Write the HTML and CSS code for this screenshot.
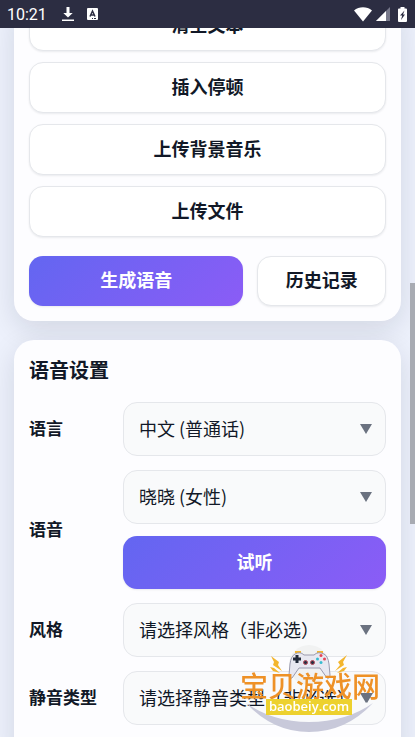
FILE: index.html
```html
<!DOCTYPE html>
<html lang="zh-CN">
<head>
    <meta charset="UTF-8">
    <meta name="viewport" content="width=device-width, initial-scale=1.0">
    <title>语音设置</title>
    <link rel="stylesheet" href="styles.css">
</head>
<body>
    <header class="status-bar">
        <span class="time">10:21</span>
        <svg class="icon-download" width="14" height="16" viewBox="0 0 14 16" fill="#fff">
            <path d="M5.500 1h3v6h3.200L7 11.500 2.300 7h3.200zM1 13.500h12V15H1z"/>
        </svg>
        <svg width="11" height="12" viewBox="0 0 11 12">
            <rect width="11" height="12" rx="1" fill="#fff"/>
            <path d="M3 8.500 5.500 3 8 8.500M4 7h3" fill="none" stroke="#2c2d42" stroke-width="1.500"/>
            <path d="M5 10.500h1M7 10.500h2" stroke="#2c2d42" stroke-width="1"/>
        </svg>
        <div class="status-right">
            <svg width="18" height="15" viewBox="0 0 18 15" fill="#fff">
                <path d="M0 3.500C5-.8 13-.8 18 3.500L9 14.500z"/>
            </svg>
            <svg width="14" height="14" viewBox="0 0 14 14">
                <path d="M14 0v14H0z" fill="#77788a"/>
                <path d="M10 4v10H0z" fill="#fff"/>
            </svg>
            <svg class="icon-battery" width="9" height="15" viewBox="0 0 9 15">
                <path d="M2.500 0h4v1.500H8q1 0 1 1V14q0 1-1 1H1q-1 0-1-1V2.500q0-1 1-1h1.500z" fill="#fff"/>
                <path d="M6.500 3.500 2 8.500h2.200L3 13l4-5.500H5z" fill="#2c2d42"/>
            </svg>
        </div>
    </header>

    <main class="page">
        <!-- 文本操作 -->
        <section class="card card-tools">
            <div class="tools">
                <button class="btn" type="button">清空文本</button>
                <button class="btn" type="button">插入停顿</button>
                <button class="btn" type="button">上传背景音乐</button>
                <button class="btn" type="button">上传文件</button>
            </div>
            <div class="actions">
                <button class="btn btn-primary" type="button">生成语音</button>
                <button class="btn" type="button">历史记录</button>
            </div>
        </section>

        <!-- 语音设置 -->
        <section class="card card-settings">
            <h2>语音设置</h2>
            <div class="row">
                <label for="language">语言</label>
                <div class="select-box">
                    <select id="language"><option>中文 (普通话)</option></select>
                </div>
            </div>
            <div class="row">
                <label for="voice">语音</label>
                <div class="voice">
                    <div class="select-box">
                        <select id="voice"><option>晓晓 (女性)</option></select>
                    </div>
                    <button class="btn btn-primary" type="button">试听</button>
                </div>
            </div>
            <div class="row">
                <label for="style">风格</label>
                <div class="select-box">
                    <select id="style"><option>请选择风格（非必选）</option></select>
                </div>
            </div>
            <div class="row">
                <label for="silence">静音类型</label>
                <div class="select-box">
                    <select id="silence"><option>请选择静音类型（非必选）</option></select>
                </div>
            </div>
        </section>
    </main>

    <div class="scrollbar"></div>

    <!-- 水印 -->
    <svg class="watermark" width="144" height="94" viewBox="0 0 144 94">
        <circle cx="71" cy="21" r="20" fill="#f1f2f2"/>
        <path d="M8 59Q35 88 71 88Q108 88 135 59Q108 78 71 78Q35 78 8 59z" fill="#c8c9da"/>
        <g fill="#f3b62f">
            <path d="M33 12l8 6-1 3 4 6-9-6 1-3zM32 23l4 1 6 5-7-2zM109 11l-9 7 2 3-5 6 9-6-1-3zM109 23l-4 1-6 5 7-2z"/>
            <path d="M57 7h6v2h-6zM79 7h6v2h-6z"/>
        </g>
        <path d="M57 10Q62 7 66 11H76Q80 7 86 10Q90 12 91 20L92 31Q92 35 89 34L82 24H61L54 34Q51 35 51 31L52 20Q53 12 57 10z" fill="#e8e8f1" stroke="#9a9aae" stroke-width="1"/>
        <path d="M59 11v8M55 15h8" stroke="#222a3a" stroke-width="3"/>
        <g fill="#38bcd0"><circle cx="79.500" cy="15" r="1.500"/><circle cx="83" cy="18.500" r="1.500"/></g>
        <g fill="#e64557"><circle cx="83" cy="11.500" r="1.500"/><circle cx="86.500" cy="15" r="1.500"/></g>
        <g fill="#293144" stroke="#b84a5a"><circle cx="67.500" cy="18.500" r="2"/><circle cx="74.500" cy="18.500" r="2"/></g>
        <text class="mark-name" x="2" y="53">宝贝游戏网</text>
        <rect x="28" y="55" width="86" height="16" fill="#edd12e"/>
        <text class="mark-url" x="71" y="67" text-anchor="middle">baobeiy.com</text>
        <path d="M123 49h12l-6 10z" fill="#6b7280"/>
    </svg>
</body>
</html>
```
FILE: styles.css
```css
* {
    box-sizing: border-box;
}

body {
    margin: 0;
    height: 100vh;
    overflow: hidden;
    font-family: "Noto Sans CJK SC", sans-serif;
    font-size: 18px;
    color: #111827;
    background-color: #edf1fc;
}

/* 状态栏 */
.status-bar {
    position: fixed;
    top: 0;
    left: 0;
    right: 0;
    z-index: 2;
    display: flex;
    align-items: center;
    gap: 12px;
    height: 28px;
    padding: 0 8px 0 7px;
    color: #fff;
    background-color: #2c2d42;
}

.time {
    font-family: Roboto, sans-serif;
    font-size: 16px;
}

.icon-download {
    margin-left: 2px;
}

.status-right {
    display: flex;
    align-items: center;
    gap: 4px;
    margin-left: auto;
}

.icon-battery {
    margin-left: 4px;
}

/* 卡片 */
.page {
    display: flex;
    flex-direction: column;
    gap: 19px;
    padding: 0 14px;
}

.card {
    padding: 15px;
    border-radius: 20px;
    background-color: #fdfdff;
    box-shadow: 0 8px 28px rgba(15, 23, 42, 0.12);
}

.card-tools {
    padding-top: 0;
}

.card-settings {
    display: flex;
    flex-direction: column;
    gap: 14px;
    padding-bottom: 40px;
}

.card h2 {
    margin: 0;
    padding-bottom: 3px;
    font-size: 20px;
    line-height: 30px;
    font-weight: 600;
}

.tools {
    display: flex;
    flex-direction: column;
    gap: 11px;
}

.actions {
    display: grid;
    grid-template-columns: 5fr 3fr;
    gap: 14px;
    margin-top: 19px;
}

.btn {
    height: 51px;
    padding: 0 0 4px;
    border: 1px solid #e5e7eb;
    border-radius: 14px;
    font-family: inherit;
    font-size: 18px;
    font-weight: 600;
    color: #111827;
    background-color: #fff;
    box-shadow: 0 1px 2px rgba(15, 23, 42, 0.08);
    cursor: pointer;
}

.actions .btn {
    height: 50px;
}

.btn-primary {
    border: none;
    color: #fff;
    background-image: linear-gradient(135deg, #6366f1, #8b5cf6);
}

/* 表单 */
.row {
    display: grid;
    grid-template-columns: 80px 1fr;
    gap: 14px;
    align-items: center;
}

.row label {
    padding-bottom: 3px;
    font-size: 17px;
    font-weight: 600;
}

.voice {
    display: flex;
    flex-direction: column;
    gap: 12px;
}

.voice .btn {
    height: 53px;
}

.select-box {
    position: relative;
}

.select-box select {
    display: block;
    width: 100%;
    height: 54px;
    padding: 0 36px 3px 15px;
    border: 1px solid #e5e7eb;
    border-radius: 14px;
    appearance: none;
    font-family: inherit;
    font-size: 18px;
    color: #111827;
    background-color: #f9fafb;
}

.select-box::after {
    content: "";
    position: absolute;
    top: 22px;
    right: 14px;
    border: solid transparent;
    border-width: 10px 6px 0;
    border-top-color: #6b7280;
}

.scrollbar {
    position: fixed;
    top: 283px;
    right: 0;
    width: 5px;
    height: 241px;
    background-color: #a8abb2;
}

/* 水印 */
.watermark {
    position: fixed;
    right: 33px;
    bottom: -1px;
    pointer-events: none;
}

.mark-name {
    font-size: 28px;
    font-weight: 500;
    fill: #ee9126;
}

.mark-url {
    font-family: "Open Sans", sans-serif;
    font-size: 13px;
    font-weight: 600;
    fill: #fff;
}
```
